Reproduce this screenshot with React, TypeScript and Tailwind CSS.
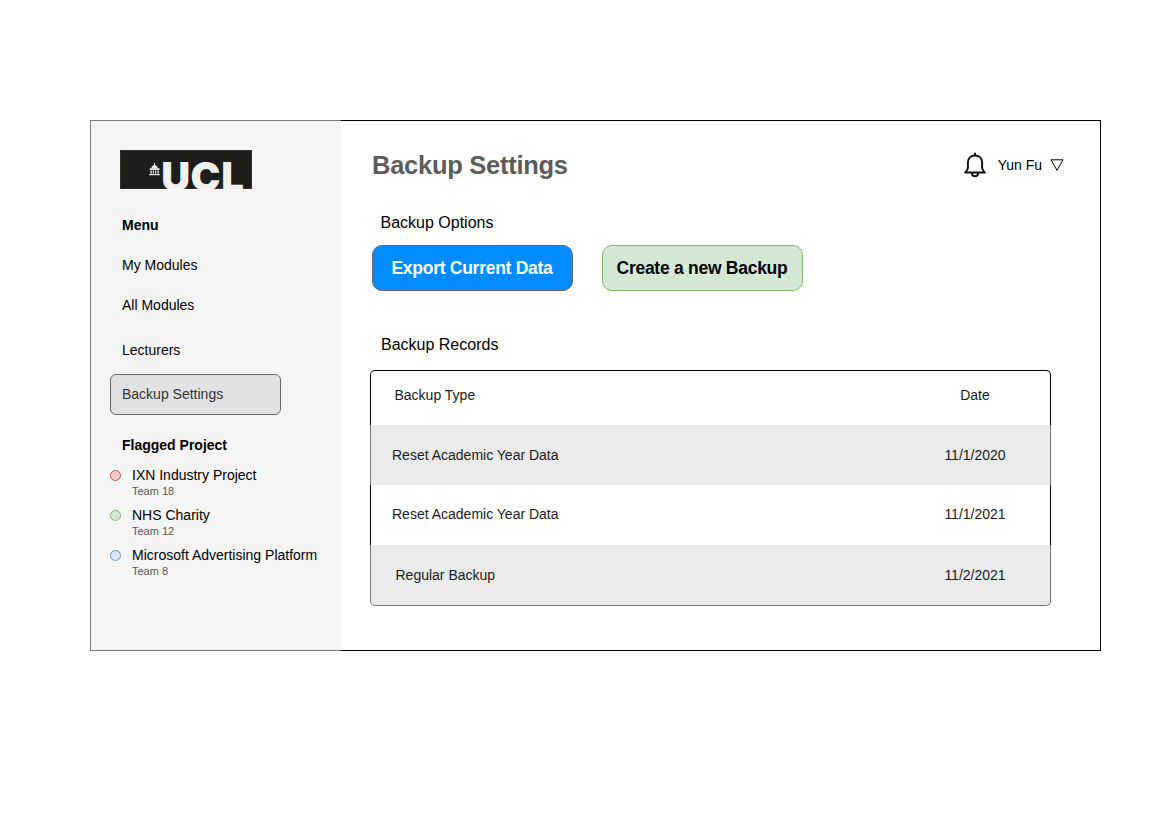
import React from "react";

const navItems = [
  { label: "My Modules", gap: "mt-5" },
  { label: "All Modules", gap: "mt-5" },
  { label: "Lecturers", gap: "mt-[25px]" },
];

const projects = [
  { name: "IXN Industry Project", team: "Team 18", dot: "border-[#c0514e] bg-[#f6cccb]" },
  { name: "NHS Charity", team: "Team 12", dot: "border-[#84b569] bg-[#d5e8d3]" },
  { name: "Microsoft Advertising Platform", team: "Team 8", dot: "border-[#6f90c4] bg-[#dae8fb]" },
];

const records = [
  { type: "Reset Academic Year Data", date: "11/1/2020", row: "border-[#757575] bg-[#ebebeb] h-[60px] pl-[21px]" },
  { type: "Reset Academic Year Data", date: "11/1/2021", row: "border-black bg-white h-[60px] pl-[21px] pb-[2px]" },
  { type: "Regular Backup", date: "11/2/2021", row: "border-[#757575] bg-[#ebebeb] h-[61px] border-b rounded-b-[5px] pl-[24.5px]" },
];

function Logo() {
  return (
    <svg className="ml-[29px] block h-[39px] w-[132px]" viewBox="0 0 132 39">
      <rect width="132" height="39" fill="#1d1d1b" />
      <rect x="0.5" y="0.5" width="131" height="38" fill="none" stroke="#333331" strokeWidth="1" />
      <g fill="#e8e8e8">
        <rect x="34" y="13" width="1" height="3" />
        <path d="M31.3 18.5 Q31.8 15.3 34.5 15 Q37.2 15.3 37.7 18.5Z" />
        <rect x="29.8" y="18.2" width="9.6" height="1.8" />
        <rect x="30.4" y="20.6" width="1.4" height="3" />
        <rect x="32.8" y="20.6" width="1.2" height="3" />
        <rect x="35.1" y="20.6" width="1.2" height="3" />
        <rect x="37.4" y="20.6" width="1.4" height="3" />
        <rect x="29.2" y="24" width="10.6" height="1.2" />
      </g>
      <text
        x="41.3 70.4 101.3"
        y="41"
        fill="#f0f0f0"
        fontFamily="Inter, sans-serif"
        fontWeight="900"
        fontSize="40"
      >
        UCL
      </text>
    </svg>
  );
}

function Sidebar() {
  return (
    <aside className="flex w-[251px] shrink-0 flex-col border-y border-l border-[#7a7a7a] bg-[#f5f5f5] pt-[29px]">
      <Logo />
      <h2 className="ml-[31px] mt-[26px] font-bold">Menu</h2>
      <nav className="flex flex-col">
        {navItems.map((item) => (
          <a key={item.label} className={`ml-[31px] ${item.gap}`}>{item.label}</a>
        ))}
        <a className="ml-[19px] mt-[14px] flex h-[41px] w-[171px] items-center rounded-[6px] border border-[#666] bg-[#e2e2e2] pb-[2px] pl-[11px] text-[#333]">
          Backup Settings
        </a>
      </nav>
      <h2 className="ml-[31px] mt-5 font-bold">Flagged Project</h2>
      <ul className="ml-[19px] mt-[10px] flex flex-col gap-2">
        {projects.map((p) => (
          <li key={p.name} className="flex gap-[11px]">
            <span className={`mt-[5px] size-[11px] shrink-0 rounded-full border ${p.dot}`} />
            <div className="flex flex-col whitespace-nowrap">
              <span>{p.name}</span>
              <span className="text-[11px] leading-3 text-[#555]">{p.team}</span>
            </div>
          </li>
        ))}
      </ul>
    </aside>
  );
}

function Header() {
  return (
    <header className="flex h-[30px] items-center pl-[31px] pr-[36px]">
      <h1 className="grow text-[25.5px] font-bold leading-[30px] tracking-[-0.27px] text-[#5c5c5c]">Backup Settings</h1>
      <svg className="h-[26px] w-[22px]" viewBox="0 0 22 26" fill="none" stroke="#111" strokeWidth="2">
        <path d="M11 0.8V3.5" />
        <path d="M3.9 16V10.6C3.9 6.4 6.8 3.6 11 3.6S18.1 6.4 18.1 10.6V16C18.3 17.8 19.4 19 20.8 20.6H1.2C2.6 19 3.7 17.8 3.9 16Z" strokeLinejoin="round" />
        <path d="M7.8 21.2C8 23.3 9.3 24.3 11 24.3S14 23.3 14.2 21.2" />
      </svg>
      <span className="ml-3">Yun Fu</span>
      <svg className="ml-2 h-[12px] w-[14px]" viewBox="0 0 14 12" fill="none" stroke="#000">
        <path d="M1 0.8H13L7 11.4Z" />
      </svg>
    </header>
  );
}

export default function App() {
  return (
    <div className="h-[827px] w-[1169px] bg-white pl-[90px] pt-[120px] font-['Liberation_Sans',Arial,sans-serif] text-[14px] leading-5 text-black">
      <div className="flex h-[531px] w-[1011px]">
        <Sidebar />
        <main className="flex grow flex-col border-y border-r border-black pt-[29px]">
          <Header />
          <h2 className="ml-[39.5px] mt-[33px] text-[16px]">Backup Options</h2>
          <div className="ml-[31px] mt-3 flex gap-[29px] text-[17.5px] font-bold tracking-[-0.27px]">
            <button className="h-[46px] w-[201px] rounded-[10px] border border-[#666] bg-[#008cff] pr-px text-white">Export Current Data</button>
            <button className="h-[46px] w-[201px] rounded-[10px] border border-[#82b366] bg-[#d5e8d4] pr-px">Create a new Backup</button>
          </div>
          <h2 className="ml-10 mt-[44px] text-[16px]">Backup Records</h2>
          <div className="ml-[29px] mt-[15px] flex w-[681px] flex-col text-[#1a1a1a]">
            <div className="flex h-[55px] rounded-t-[5px] border-x border-t border-black pl-[23.5px] pt-[14px]">
              <span className="grow">Backup Type</span>
              <span className="mr-[25px] w-[100px] text-center">Date</span>
            </div>
            {records.map((r) => (
              <div key={r.date} className={`flex items-center border-x ${r.row}`}>
                <span className="grow">{r.type}</span>
                <span className="mr-[25px] w-[100px] text-center">{r.date}</span>
              </div>
            ))}
          </div>
        </main>
      </div>
    </div>
  );
}
